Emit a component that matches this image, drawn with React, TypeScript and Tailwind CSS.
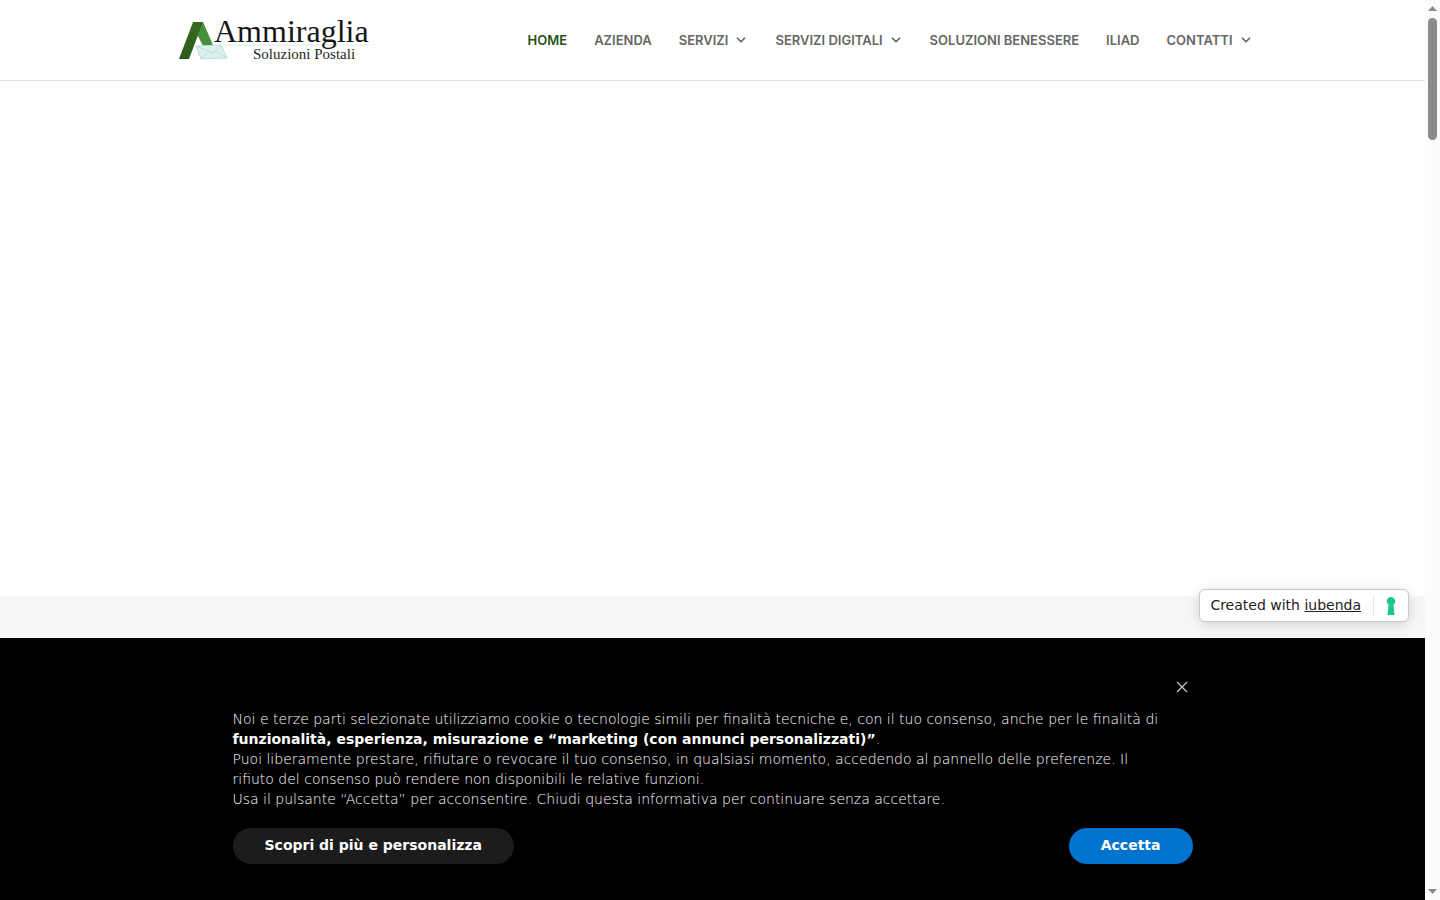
import { ChevronDown } from "lucide-react";

interface NavItem {
  label: string;
  active?: boolean;
  hasMenu?: boolean;
}

const navItems: NavItem[] = [
  { label: "HOME", active: true },
  { label: "AZIENDA" },
  { label: "SERVIZI", hasMenu: true },
  { label: "SERVIZI DIGITALI", hasMenu: true },
  { label: "SOLUZIONI BENESSERE" },
  { label: "ILIAD" },
  { label: "CONTATTI", hasMenu: true },
];

function Logo() {
  return (
    <a href="#" aria-label="Ammiraglia Soluzioni Postali" className="block">
      <svg width="200" height="56" viewBox="0 0 200 56" className="block overflow-visible">
        <defs>
          <linearGradient id="leg" x1="0" y1="0" x2="0" y2="1">
            <stop offset="0" stopColor="#356b22" />
            <stop offset="1" stopColor="#2b5a1a" />
          </linearGradient>
        </defs>
        <path d="M0 47 L14 10 H24 L10 47 Z" fill="url(#leg)" />
        <path d="M15 10 H24 L34 33 L24 34 L18 22 Z" fill="#478f3a" />
        <path d="M15 10 H24 L18 25 Z" fill="#34691f" />
        <path d="M17 34 L42 33 L48 46 L22 47 Z" fill="#dcf1ee" stroke="#b9dfda" strokeWidth="1" />
        <path d="M17 34 L34 41 L42 33 M22 47 L30 39 M48 46 L37 39" fill="none" stroke="#b9dfda" strokeWidth="1" />
        <path d="M45 33 H189" stroke="#d9ecea" strokeWidth="1" />
        <text x="35" y="30" fontSize="32" fill="#161616" fontFamily="Liberation Serif, serif">
          Ammiraglia
        </text>
        <text x="74" y="47" fontSize="15" fill="#262626" fontFamily="Liberation Serif, serif">
          Soluzioni Postali
        </text>
      </svg>
    </a>
  );
}

function Header() {
  return (
    <header className="h-[81px] shrink-0 border-b border-[#e2e2e2] bg-white">
      <div className="mx-auto flex h-20 max-w-[1080px] items-center justify-between pl-1.5">
        <Logo />
        <nav>
          <ul className="flex gap-[27px] font-['Inter',sans-serif] text-[13px] leading-5 font-semibold whitespace-nowrap text-[#666666]">
            {navItems.map((item) => (
              <li key={item.label}>
                <a
                  href="#"
                  className={item.active ? "text-[#285016]" : "flex items-center gap-1.5"}
                >
                  {item.label}
                  {item.hasMenu && <ChevronDown className="h-3.5 w-3.5" strokeWidth={3} />}
                </a>
              </li>
            ))}
          </ul>
        </nav>
      </div>
    </header>
  );
}

function PrivacyBadge() {
  return (
    <div className="absolute right-4 bottom-4 flex h-[33px] items-center rounded-md border border-[#c8c8c8] bg-white pl-2.5 text-[14px] leading-5 text-[#222222] shadow-[0_2px_12px_rgba(0,0,0,0.15)]">
      <span className="pb-0.5">
        Created with{" "}
        <a href="#" className="underline">
          iubenda
        </a>
      </span>
      <span className="ml-3 flex h-5 w-[35px] items-center justify-center border-l border-[#e5e5e5]">
        <svg width="10" height="18" viewBox="0 0 10 18">
          <path d="M5 0a4.3 4.3 0 0 1 2.4 7.8L8.6 18H1.4L2.6 7.8A4.3 4.3 0 0 1 5 0Z" fill="#1cc691" />
        </svg>
      </span>
    </div>
  );
}

function CookieBanner() {
  return (
    <section
      aria-label="Informativa"
      className="h-[262px] shrink-0 bg-black text-[14px] leading-5 text-white"
    >
      <div className="mx-auto max-w-[960px] pt-8">
        <div className="flex justify-end">
          <button type="button" aria-label="Chiudi" className="flex h-[34px] w-[22px] items-center justify-center">
            <svg width="12" height="12" viewBox="0 0 12 12" fill="none" stroke="#c8c8c8" strokeWidth="1.2">
              <path d="M1 1 L11 11 M11 1 L1 11" />
            </svg>
          </button>
        </div>
        <div className="mt-[5px] pr-6 font-extralight">
          <p>
            Noi e terze parti selezionate utilizziamo cookie o tecnologie simili per finalità
            tecniche e, con il tuo consenso, anche per le finalità di{" "}
            <strong className="font-bold">
              funzionalità, esperienza, misurazione e “marketing (con annunci personalizzati)”
            </strong>
            .
          </p>
          <p>
            Puoi liberamente prestare, rifiutare o revocare il tuo consenso, in qualsiasi momento,
            accedendo al pannello delle preferenze. Il rifiuto del consenso può rendere non
            disponibili le relative funzioni.
          </p>
          <p>
            Usa il pulsante “Accetta” per acconsentire. Chiudi questa informativa per continuare
            senza accettare.
          </p>
        </div>
        <div className="mt-[19px] flex justify-between font-bold">
          <button type="button" className="h-9 rounded-full bg-[#1c1c1c] px-8 pb-0.5">
            Scopri di più e personalizza
          </button>
          <button type="button" className="h-9 rounded-full bg-[#0073ce] px-8 pb-0.5">
            Accetta
          </button>
        </div>
      </div>
    </section>
  );
}

function ScrollTrack() {
  return (
    <div className="flex w-[15px] shrink-0 flex-col items-center bg-[#fcfcfc] py-1.5">
      <svg width="9" height="5" viewBox="0 0 9 5" className="shrink-0">
        <path d="M0 5 L4.5 0 L9 5 Z" fill="#8b8b8b" />
      </svg>
      <div className="mt-[7px] h-[122px] w-[9px] rounded-full bg-[#8b8b8b]" />
      <svg width="9" height="5" viewBox="0 0 9 5" className="mt-auto shrink-0">
        <path d="M0 0 L4.5 5 L9 0 Z" fill="#8b8b8b" />
      </svg>
    </div>
  );
}

export default function App() {
  return (
    <div className="flex h-screen overflow-hidden bg-white font-['DejaVu_Sans',sans-serif]">
      <div className="flex min-w-0 flex-1 flex-col">
        <Header />
        <main className="relative flex flex-1 flex-col">
          <div className="flex-1 bg-white" />
          <div className="h-[42px] bg-[#f6f6f6]" />
          <PrivacyBadge />
        </main>
        <CookieBanner />
      </div>
      <ScrollTrack />
    </div>
  );
}
